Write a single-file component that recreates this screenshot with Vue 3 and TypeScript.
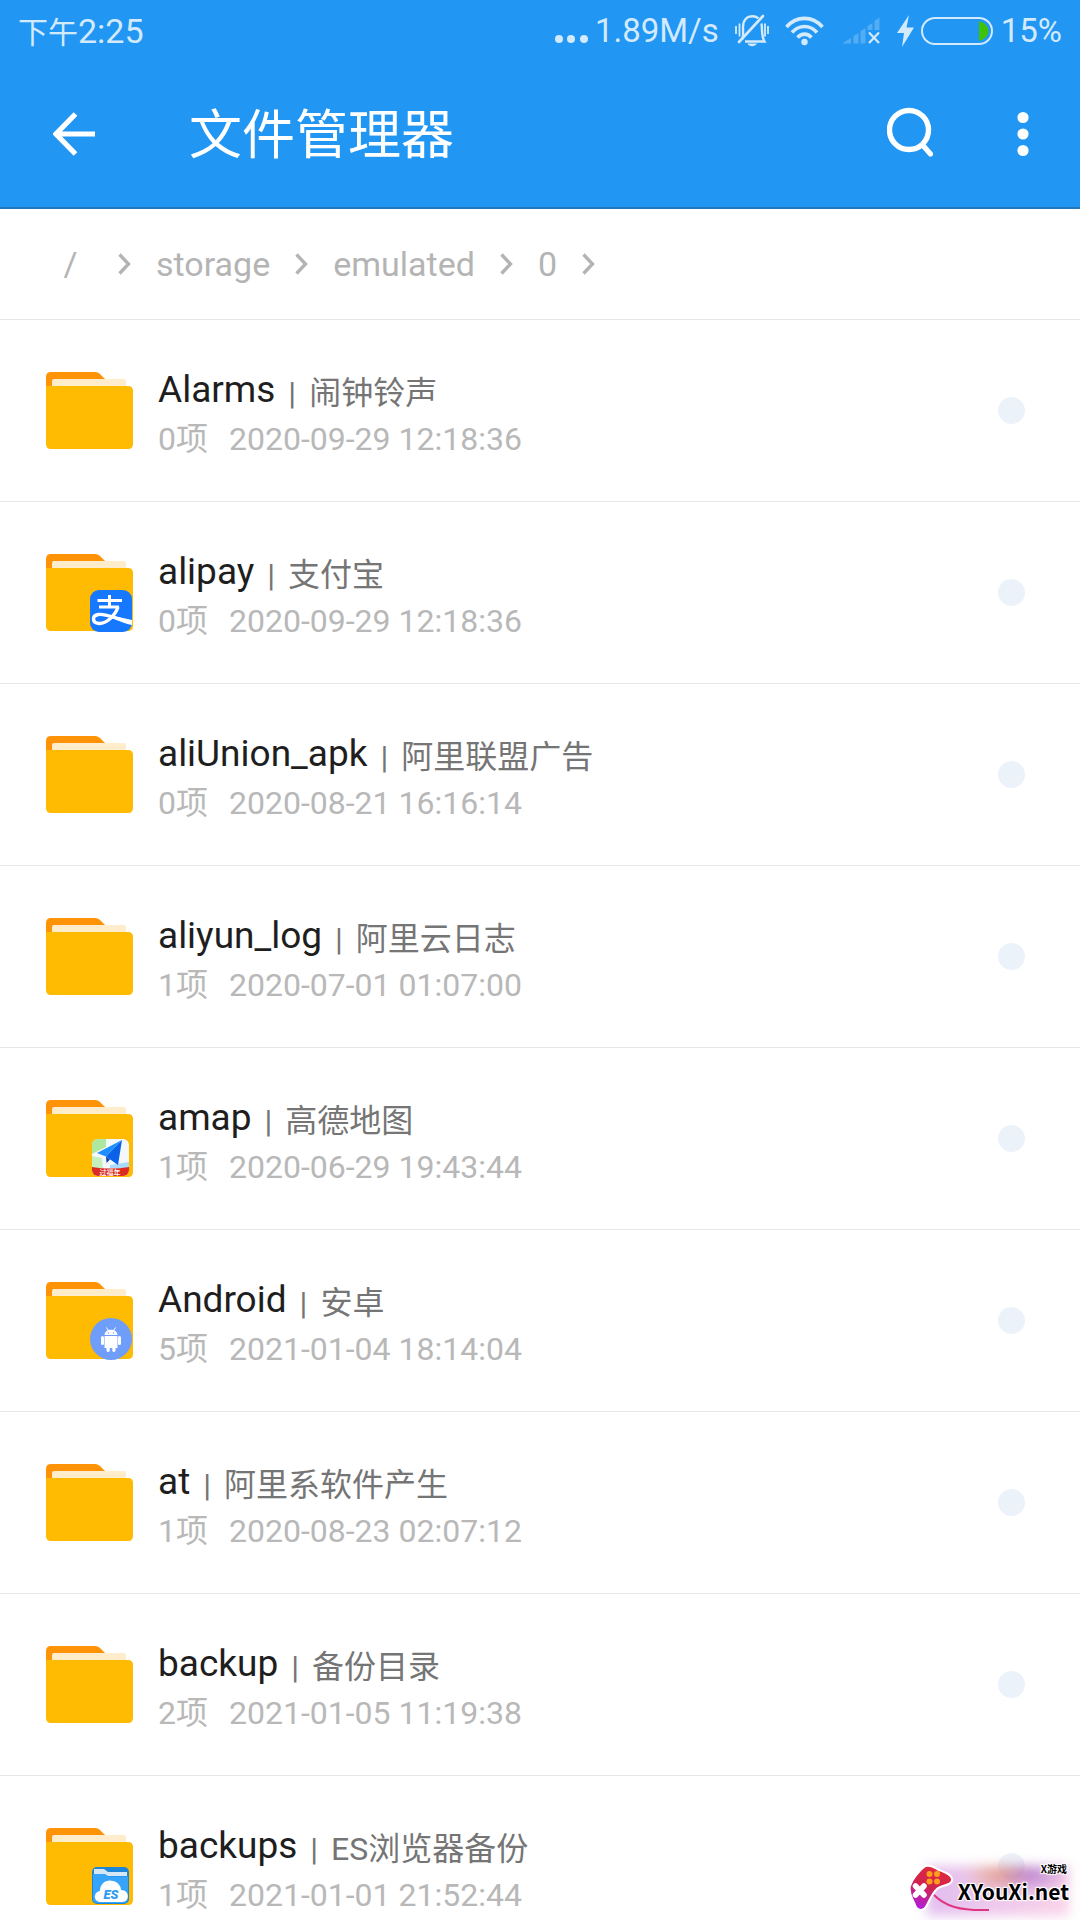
<script setup lang="ts">
type Badge = 'alipay' | 'amap' | 'android' | 'es'

interface Folder {
  name: string
  label: string
  count: number
  modified: string
  badge?: Badge
}

const crumbs: string[] = ['/', 'storage', 'emulated', '0']

const folders: Folder[] = [
  { name: 'Alarms', label: '闹钟铃声', count: 0, modified: '2020-09-29 12:18:36' },
  { name: 'alipay', label: '支付宝', count: 0, modified: '2020-09-29 12:18:36', badge: 'alipay' },
  { name: 'aliUnion_apk', label: '阿里联盟广告', count: 0, modified: '2020-08-21 16:16:14' },
  { name: 'aliyun_log', label: '阿里云日志', count: 1, modified: '2020-07-01 01:07:00' },
  { name: 'amap', label: '高德地图', count: 1, modified: '2020-06-29 19:43:44', badge: 'amap' },
  { name: 'Android', label: '安卓', count: 5, modified: '2021-01-04 18:14:04', badge: 'android' },
  { name: 'at', label: '阿里系软件产生', count: 1, modified: '2020-08-23 02:07:12' },
  { name: 'backup', label: '备份目录', count: 2, modified: '2021-01-05 11:19:38' },
  { name: 'backups', label: 'ES浏览器备份', count: 1, modified: '2021-01-01 21:52:44', badge: 'es' },
]
</script>

<template>
  <div class="screen">
    <header class="top">
      <div class="status">
        <span class="clock"><span class="meridiem">下午</span>2:25</span>
        <div class="indicators">
          <svg class="dots" width="33" height="10" viewBox="0 0 33 10" fill="currentColor">
            <circle cx="4" cy="5" r="4" /><circle cx="16" cy="5" r="4" /><circle cx="29" cy="5" r="4" />
          </svg>
          <span class="speed">1.89M/s</span>
          <svg class="bell" width="34" height="34" viewBox="0 0 34 34" fill="none" stroke="currentColor" stroke-width="2.4">
            <path d="M7.5 25 C8.5 22 8 18 8 13 C8 6 12 2.2 17.500 2.200 C20 2.200 22 3 23.500 4.300" />
            <path d="M26.500 9.500 C27.500 15 26 21 29.500 27.500 L10 27.500" />
            <path d="M28 2 L4 28" stroke-width="2.600" stroke-linecap="round" />
            <path d="M12.500 29.500 C14 33 20 33 22 29.500 Z" fill="currentColor" stroke="none" />
            <path d="M1 12 V20 M4.500 9.500 V22.500 M30 9.500 V22.500 M33 12 V20" stroke-width="1.800" />
          </svg>
          <svg class="wifi" width="39" height="30" viewBox="0 0 39 30" fill="none" stroke="currentColor" stroke-width="3.600">
            <path d="M1.500 11 C11.500 -0.500 27.500 -0.500 37.500 11" />
            <path d="M7 16.500 C14 8.500 25 8.500 32 16.500" />
            <path d="M12.500 21.500 C16.500 17 22.500 17 26.500 21.500" />
            <circle cx="19.500" cy="26" r="3.200" fill="currentColor" stroke="none" />
          </svg>
          <svg class="signal" width="38" height="28" viewBox="0 0 38 28">
            <path d="M0 26.500 L9 21 V26.500 Z M11.500 19 L16.500 16 V26.500 H11.500 Z M18.500 14 L23.500 11 V26.500 H18.500 Z M25.500 9 L30.500 6 V13 H25.500 Z M32.500 4 L37.500 0.500 V13 H32.500 Z" fill="currentColor" opacity="0.280" />
            <path d="M27 15.500 L37 26 M37 15.500 L27 26" stroke="currentColor" stroke-width="2.200" />
          </svg>
          <svg class="bolt" width="17" height="32" viewBox="0 0 17 32" fill="currentColor">
            <path d="M12 0 L0 18 H7 L5 32 L17 12.500 H9.500 Z" />
          </svg>
          <svg class="battery" width="72" height="28" viewBox="0 0 72 28">
            <path d="M58 4.500 H59.500 C64 6 67.500 10 67.500 14 C67.500 18 64 22 59.500 23.500 H58 Z" fill="#3fc20a" />
            <rect x="1" y="1" width="70" height="26" rx="13" fill="none" stroke="currentColor" stroke-width="2" />
          </svg>
          <span class="percent">15%</span>
        </div>
      </div>
      <div class="toolbar">
        <button class="tool back" type="button" aria-label="返回">
          <svg width="42" height="44" viewBox="0 0 42 44" fill="none" stroke="currentColor" stroke-width="5.200">
            <path d="M22.500 2 L3 22 L22.500 42 M3 22 H42" stroke-linejoin="miter" />
          </svg>
        </button>
        <h1 class="title">文件管理器</h1>
        <button class="tool search" type="button" aria-label="搜索">
          <svg width="46" height="54" viewBox="0 0 46 54" fill="none" stroke="currentColor">
            <circle cx="22" cy="23" r="19.500" stroke-width="5.400" />
            <path d="M36 38.500 L43.500 47" stroke-width="5.200" stroke-linecap="round" />
          </svg>
        </button>
        <button class="tool more" type="button" aria-label="更多">
          <svg width="12" height="46" viewBox="0 0 12 46" fill="currentColor">
            <circle cx="6" cy="6.500" r="5.600" /><circle cx="6" cy="23" r="5.600" /><circle cx="6" cy="39.500" r="5.600" />
          </svg>
        </button>
      </div>
    </header>

    <nav class="crumbs">
      <template v-for="crumb in crumbs" :key="crumb">
        <a class="crumb" :class="{ root: crumb === '/' }" href="#">{{ crumb }}</a>
        <svg class="chevron" width="13" height="22" viewBox="0 0 13 22" fill="none" stroke="currentColor" stroke-width="3.400">
          <path d="M1.500 1.500 L10.500 11 L1.500 20.500" />
        </svg>
      </template>
    </nav>

    <ul class="list">
      <li v-for="(folder, index) in folders" :key="folder.name" class="row">
        <svg class="folder" width="87" height="78" viewBox="0 0 87 78">
          <path d="M0 5 Q0 0 5 0 H49 Q52 0 54 2 L61 9 V30 H0 Z" fill="#ff9307" />
          <rect x="6" y="7" width="74" height="12" rx="2" fill="#ffeccb" />
          <path d="M0 14 H82 Q87 14 87 19 V72 Q87 77 82 77 H5 Q0 77 0 72 Z" fill="#ffba02" />
          <g v-if="folder.badge === 'alipay'">
            <rect x="44" y="36" width="42" height="42" rx="9" fill="#1677ff" />
            <path d="M51.500 46.500 H76 M63.500 41 V52.500 M53 53 H73" stroke="#fff" stroke-width="3" fill="none" />
            <path d="M72 53 C69 62 60 70 53 69.500 C46 69 45.500 61.500 52.500 60.500 C61 59.500 73 66 86 68.500" stroke="#fff" stroke-width="3.400" fill="none" />
            <path d="M68 62 L86 66 V71 C80 70 73 67 66 64 Z" fill="#fff" />
          </g>
          <g v-else-if="folder.badge === 'amap'">
            <clipPath id="amap-tile"><rect x="46" y="39" width="37" height="37" rx="6" /></clipPath>
            <g clip-path="url(#amap-tile)">
              <rect x="46" y="39" width="37" height="37" fill="#f4f8fa" />
              <path d="M46 39 H60 V47 L46 54 Z" fill="#aee8a0" />
              <path d="M46 56 L56 58 L57 68 H46 Z" fill="#c6efbe" />
              <path d="M64 65 L83 62 V68 H64 Z" fill="#a9dcfb" />
              <path d="M76 40 L51 53 L60 56.500 Z" fill="#1d90ff" />
              <path d="M76 40 L60 56.500 L72 65 Z" fill="#0a62e8" />
              <path d="M60 56.500 L60.500 63 L64 59.500 Z" fill="#0a45b0" />
              <path d="M46 67 Q64.500 70 83 67 V76 H46 Z" fill="#dc2c22" />
              <text x="64" y="75" text-anchor="middle" font-size="7" font-weight="500" fill="#fff">过福年</text>
            </g>
          </g>
          <g v-else-if="folder.badge === 'android'">
            <circle cx="65" cy="57" r="21" fill="#6f9efa" />
            <g fill="#fff">
              <path d="M58.500 53 C59 46 71 46 71.500 53 Z" />
              <path d="M58.500 54 H71.500 V66 H58.500 Z" />
              <rect x="55" y="54" width="3" height="9" rx="1.500" />
              <rect x="72" y="54" width="3" height="9" rx="1.500" />
              <rect x="60.500" y="64" width="3.200" height="6" rx="1.400" />
              <rect x="66.300" y="64" width="3.200" height="6" rx="1.400" />
            </g>
            <path d="M60.500 45.500 L62.500 49 M69.500 45.500 L67.500 49" stroke="#fff" stroke-width="1" />
            <circle cx="62.500" cy="51" r="0.700" fill="#6f9efa" /><circle cx="67.500" cy="51" r="0.700" fill="#6f9efa" />
          </g>
          <g v-else-if="folder.badge === 'es'">
            <rect x="46" y="39" width="37" height="37" rx="5" fill="#1b86d8" />
            <path d="M48 41 H58 L62 44 H81 V48 H48 Z" fill="#d5e7f5" />
            <path d="M47 46 H59 L63 48.500 H82 V71 Q82 75 78 75 H51 Q47 75 47 71 Z" fill="#36a4fa" />
            <path d="M55 74 C47 74 47 64 54 63 C54 55 61 51 67 53 C72 54 75 58 75 62 C84 62 84 74 76 74 Z" fill="#fff" />
            <text x="65" y="71" text-anchor="middle" font-size="13" font-weight="900" font-style="italic" fill="#2d9cf2">ES</text>
          </g>
        </svg>
        <div class="info">
          <div class="heading">
            <span class="name">{{ folder.name }}</span>
            <span class="label">|</span>
            <span class="label">{{ folder.label }}</span>
          </div>
          <div class="meta">
            <span>{{ folder.count }}项</span>
            <span>{{ folder.modified }}</span>
          </div>
        </div>
        <input :id="`pick-${index}`" class="pick" type="checkbox" :aria-label="folder.name">
      </li>
    </ul>

    <div class="watermark">
      <svg class="pad" width="48" height="48" viewBox="0 0 48 48">
        <defs>
          <linearGradient id="pad-fill" x1="0.700" y1="0" x2="0.300" y2="1">
            <stop offset="0" stop-color="#e02a3c" />
            <stop offset="0.500" stop-color="#d0244f" />
            <stop offset="1" stop-color="#b01ee0" />
          </linearGradient>
        </defs>
        <path d="M17 3 C20 1 25 2 30 5 C36 8 44 9 45 15 C46 21 36 21 31 24 C26 28 23 35 20 41 C17 48 10 47 8 41 C6 35 1 30 3 22 C5 15 12 7 17 3 Z" fill="url(#pad-fill)" stroke="#fff" stroke-width="2" />
        <g fill="#ff9d1c"><circle cx="22.500" cy="10" r="3" /><circle cx="30" cy="10" r="3" /><circle cx="22.500" cy="17.500" r="3" /><circle cx="30" cy="17.500" r="3" /></g>
        <path d="M8.500 22 L17 31 M17 22 L8.500 31" stroke="#fff" stroke-width="5.500" stroke-linecap="round" />
      </svg>
      <svg class="tail" width="60" height="20" viewBox="0 0 60 20" fill="none">
        <path d="M1 1 C12 12 26 17 56 16" stroke="#e0357e" stroke-width="2" />
      </svg>
      <div class="words">
        <span class="small">X游戏</span>
        <span class="site">XYouXi.net</span>
      </div>
    </div>
  </div>
</template>

<style>
body {
  margin: 0;
  background: #fff;
}
</style>

<style scoped>
.screen {
  position: relative;
  height: 100vh;
  overflow: hidden;
  background: #fff;
  font-family: Roboto, "Noto Sans CJK SC", sans-serif;
}

.top {
  background: #2196f3;
  color: #fff;
}

.status {
  display: flex;
  align-items: center;
  justify-content: space-between;
  box-sizing: border-box;
  height: 68px;
  padding: 0 18px 4px;
  color: #d3eafd;
  font-size: 34px;
  line-height: 40px;
}

.meridiem {
  font-size: 30px;
}

.indicators {
  display: flex;
  align-items: center;
  padding-bottom: 2px;
  font-size: 33px;
}

.dots {
  margin: 16px 7px 0 0;
}

.bell {
  margin: 0 16px;
}

.signal {
  margin: 0 17px 0 18px;
}

.bolt {
  margin-right: 7px;
}

.percent {
  margin-left: 8px;
}

.toolbar {
  display: flex;
  align-items: center;
  box-sizing: border-box;
  height: 141px;
  padding: 0 51px 8px 53px;
  border-bottom: 2px solid #2478ba;
}

.tool {
  display: flex;
  padding: 0;
  border: 0;
  background: none;
  color: inherit;
}

.title {
  flex: 1;
  margin: 0 0 0 94px;
  padding-top: 4px;
  font-size: 53px;
  font-weight: 400;
  line-height: 80px;
}

.more {
  margin-left: 84px;
}

.crumbs {
  display: flex;
  align-items: center;
  gap: 25px;
  box-sizing: border-box;
  height: 111px;
  padding: 0 48px;
  border-bottom: 1px solid #e6e6e6;
  color: #b4b4b4;
  font-size: 34px;
  line-height: 40px;
}

.crumb {
  color: inherit;
  text-decoration: none;
}

.root {
  width: 45px;
  text-align: center;
}

.list {
  margin: 0;
  padding: 0;
  list-style: none;
}

.row {
  display: flex;
  align-items: center;
  box-sizing: border-box;
  height: 182px;
  padding: 0 55px 0 46px;
  border-bottom: 1px solid #e6e6e6;
}

.folder {
  flex: none;
  margin-right: 25px;
}

.info {
  flex: 1;
  padding-top: 6px;
}

.heading {
  display: flex;
  align-items: flex-end;
  gap: 13px;
  height: 50px;
}

.name {
  color: #1e1e1e;
  font-size: 37px;
  line-height: 50px;
}

.label {
  color: #757575;
  font-size: 32px;
  line-height: 44px;
}

.meta {
  display: flex;
  gap: 21px;
  color: #b8b8b8;
  font-size: 32px;
  line-height: 48px;
}

.pick {
  appearance: none;
  width: 27px;
  height: 27px;
  margin: 0;
  border-radius: 50%;
  background: #ecf2fa;
}

.watermark {
  position: absolute;
  right: 11px;
  bottom: 4px;
  display: flex;
  align-items: flex-end;
  font-family: "Noto Sans CJK SC", sans-serif;
  font-weight: 700;
}

.watermark::before {
  content: "";
  position: absolute;
  inset: 4px 0 0 20px;
  background:
    radial-gradient(ellipse at 50% 15%, rgba(240, 160, 90, 0.6), transparent 35%),
    radial-gradient(ellipse at 70% 15%, rgba(140, 70, 190, 0.6), transparent 35%),
    linear-gradient(90deg, rgba(190, 110, 220, 0.45), rgba(240, 130, 190, 0.35));
  filter: blur(6px);
}

.pad {
  position: relative;
  margin: 0 3px 4px 0;
}

.tail {
  position: absolute;
  left: 26px;
  bottom: 2px;
}

.words {
  position: relative;
  display: flex;
  flex-direction: column;
  align-items: flex-end;
  padding-bottom: 10px;
  color: #000;
  text-shadow: 1px 1px 1px #fff, -1px -1px 1px #fff, 1px -1px 1px #fff, -1px 1px 1px #fff;
}

.small {
  margin-right: 2px;
  font-size: 10px;
  line-height: 14px;
}

.site {
  font-size: 21px;
  line-height: 30px;
}
</style>
